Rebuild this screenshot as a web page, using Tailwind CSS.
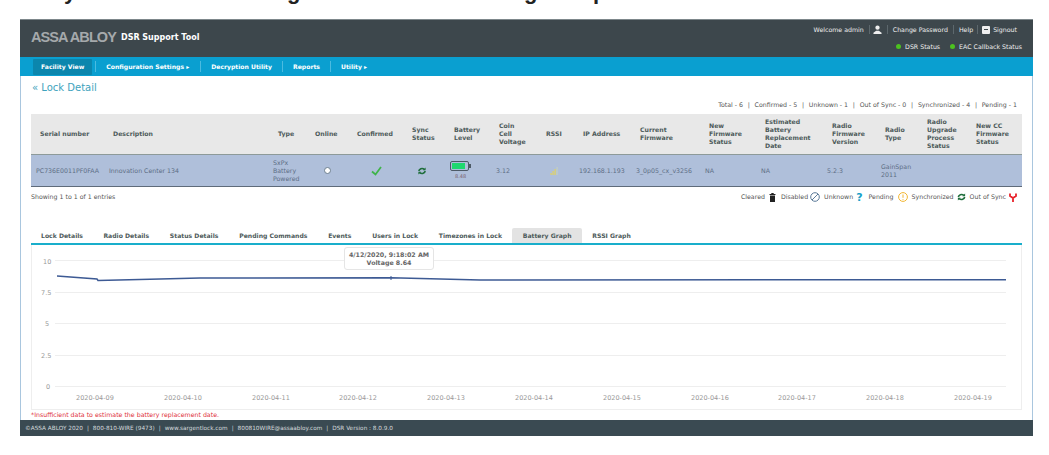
<!DOCTYPE html>
<html lang="en">
<head>
    <meta charset="UTF-8">
    <title>DSR Support Tool</title>
    <script src="https://cdn.jsdelivr.net/npm/@tailwindcss/browser@4"></script>
</head>
<body class="relative bg-white w-[1049px] h-[455px] overflow-hidden font-['DejaVu_Sans',sans-serif] text-[6.25px] text-[#555]">

    <!-- descenders of the heading cut off at the top of the screenshot -->
    <div class="absolute top-[-20px] left-0 font-['Liberation_Sans',sans-serif] text-[22px] leading-[24px] font-bold text-[#222]">
        <span class="absolute left-[64px]">y</span>
        <span class="absolute left-[287px]">g</span>
        <span class="absolute left-[524px]">g</span>
        <span class="absolute left-[593px]">p</span>
    </div>

    <div class="h-[19px]"></div>

    <div class="ml-[20px] w-[1013px] h-[417px] flex flex-col">
        <!-- header -->
        <header class="h-[38px] bg-[#3d474c] border-t border-[#7d878b] flex justify-between text-white shrink-0">
            <div class="flex items-center pl-[11px] pb-[2px]">
                <span class="font-['Liberation_Sans',sans-serif] text-[14.5px] font-bold tracking-[-0.9px] text-[#a5a9ab]">ASSA ABLOY</span>
                <span class="ml-[5px] text-[8px] font-bold">DSR Support Tool</span>
            </div>
            <div class="flex flex-col items-end pr-[11px] pt-[5px] gap-[8px] text-[#eee] leading-[9px]">
                <div class="flex items-center pr-[5px]">
                    <span>Welcome admin</span>
                    <span class="ml-[5px] mr-[3px] h-[9px] border-l border-[#5d686d]"></span>
                    <svg class="w-[9px] h-[9px]" viewBox="0 0 10 10" fill="#eee"><circle cx="5" cy="3" r="2.4"/><path d="M0.5 10V8.5L3.5 6.5H6.500L9.500 8.500V10Z"/></svg>
                    <span class="mx-[5px] h-[9px] border-l border-[#5d686d]"></span>
                    <span>Change Password</span>
                    <span class="mx-[5px] h-[9px] border-l border-[#5d686d]"></span>
                    <span>Help</span>
                    <span class="mx-[4px] h-[9px] border-l border-[#5d686d]"></span>
                    <span class="w-[8px] h-[8px] bg-[#eee] rounded-[1px] mr-[3px] flex items-center justify-center"><span class="w-[4px] h-[1px] bg-[#3d474c]"></span></span>
                    <span>Signout</span>
                </div>
                <div class="flex items-center">
                    <span class="w-[5px] h-[5px] rounded-full bg-[#4cc21f] mr-[4px]"></span>
                    <span>DSR Status</span>
                    <span class="w-[5px] h-[5px] rounded-full bg-[#4cc21f] ml-[10px] mr-[4px]"></span>
                    <span>EAC Callback Status</span>
                </div>
            </div>
        </header>

        <!-- nav -->
        <nav class="h-[19px] bg-[#0a9fd0] flex items-center pl-[13px] text-white font-bold text-[6.1px] shrink-0">
            <span class="h-[16px] px-[8px] flex items-center bg-[#0b86ad] rounded-[1px]">Facility View</span>
            <span class="ml-[3px] h-[11px] border-l border-[#4bbbe0]"></span>
            <span class="pl-[10px] pr-[11px]">Configuration Settings &#9656;</span>
            <span class="h-[11px] border-l border-[#4bbbe0]"></span>
            <span class="px-[10px]">Decryption Utility</span>
            <span class="h-[11px] border-l border-[#4bbbe0]"></span>
            <span class="px-[10px]">Reports</span>
            <span class="h-[11px] border-l border-[#4bbbe0]"></span>
            <span class="px-[10px]">Utility &#9656;</span>
        </nav>

        <!-- content -->
        <main class="flex-1 border-x border-[#a9c6de] px-[10px] flex flex-col min-h-0">
            <h1 class="pl-[1px] pt-[3px] text-[10px] leading-[18px] text-[#3ea3bd] h-[22px]">&laquo; Lock Detail</h1>

            <div class="flex justify-end pr-[5px] pb-[2px] h-[16px] items-center gap-[4.75px]">
                <span>Total - 6</span><span>|</span><span>Confirmed - 5</span><span>|</span><span>Unknown - 1</span><span>|</span><span>Out of Sync - 0</span><span>|</span><span>Synchronized - 4</span><span>|</span><span>Pending - 1</span>
            </div>

            <!-- table -->
            <div class="grid grid-cols-[74px_164px_42px_42px_55px_42px_45px_47px_33px_57px_69px_56px_66px_54px_46px_49px_50px] h-[73px]">
                <div class="col-span-17 grid grid-cols-subgrid h-[41px] bg-[#e8e8e8] border-b border-[#8d9a99] font-bold items-center text-[#4d5a5a] text-[6.2px] leading-[7.8px]">
                    <span class="pl-[9px] whitespace-nowrap">Serial number</span>
                    <span class="pl-[8px]">Description</span>
                    <span class="pl-[9px]">Type</span>
                    <span class="pl-[4px]">Online</span>
                    <span class="pl-[4px]">Confirmed</span>
                    <span class="pl-[4px]">Sync<br>Status</span>
                    <span class="pl-[4px]">Battery<br>Level</span>
                    <span class="pl-[4px]">Coin<br>Cell<br>Voltage</span>
                    <span class="pl-[4px]">RSSI</span>
                    <span class="pl-[8px]">IP Address</span>
                    <span class="pl-[8px]">Current<br>Firmware</span>
                    <span class="pl-[8px]">New<br>Firmware<br>Status</span>
                    <span class="pl-[8px]">Estimated<br>Battery<br>Replacement<br>Date</span>
                    <span class="pl-[9px]">Radio<br>Firmware<br>Version</span>
                    <span class="pl-[8px]">Radio<br>Type</span>
                    <span class="pl-[4px]">Radio<br>Upgrade<br>Process<br>Status</span>
                    <span class="pl-[4px]">New CC<br>Firmware<br>Status</span>
                </div>
                <div class="col-span-17 grid grid-cols-subgrid h-[32px] bg-[#afbfda] border-b border-[#5f6b7a] items-center text-[#5d6e85] leading-[8px]">
                    <span class="pl-[5px] whitespace-nowrap">PC736E0011PF0FAA</span>
                    <span class="pl-[4px]">Innovation Center 134</span>
                    <span class="pl-[4px]">SxPx<br>Battery<br>Powered</span>
                    <span class="pl-[13px]"><span class="block w-[7px] h-[7px] rounded-full bg-white border border-[#6d7f8f]"></span></span>
                    <span class="pl-[18px]">
                        <svg class="w-[11px] h-[10px]" viewBox="0 0 11 10" fill="none" stroke="#3fb44a" stroke-width="1.8"><path d="M1 5.500L4.500 8.500L10 1"/></svg>
                    </span>
                    <span class="pl-[10px]">
                        <svg class="w-[8px] h-[8px]" viewBox="0 0 10 10" fill="none" stroke="#1f6e3c" stroke-width="2"><path d="M1 5C1.500 2.500 5 0.500 8 3"/><path d="M9 5C8.500 7.500 5 9.500 2 7"/><path d="M9.500 0.500V4H6Z" fill="#1f6e3c" stroke="none"/><path d="M0.500 9.500V6H4Z" fill="#1f6e3c" stroke="none"/></svg>
                    </span>
                    <span class="flex flex-col items-start">
                        <span class="w-[19px] h-[10px] border-[1.5px] border-[#4d5a66] rounded-[2px] p-[1px] relative"><span class="block h-full w-[13px] bg-[#1fd86f]"></span><span class="absolute right-[-3px] top-[2px] w-[2px] h-[4px] bg-[#4d5a66]"></span></span>
                        <span class="pl-[5px] text-[5px] leading-[7px] mt-[2px] text-[#7a5f70]">8.48</span>
                    </span>
                    <span class="pl-[1px]">3.12</span>
                    <span class="pl-[8px]">
                        <svg class="w-[8px] h-[9px]" viewBox="0 0 8 9" fill="#e3d35f"><rect x="0.500" y="7" width="1.200" height="2"/><rect x="2.500" y="5" width="1.200" height="4"/><rect x="4.500" y="3" width="1.200" height="6"/><rect x="6.500" y="1" width="1.200" height="8" fill="#c4cfc0"/></svg>
                    </span>
                    <span class="pl-[4px] whitespace-nowrap">192.168.1.193</span>
                    <span class="pl-[4px] whitespace-nowrap">3_0p05_cx_v3256</span>
                    <span class="pl-[4px]">NA</span>
                    <span class="pl-[4px]">NA</span>
                    <span class="pl-[4px]">5.2.3</span>
                    <span class="pl-[4px]">GainSpan<br>2011</span>
                    <span></span>
                    <span></span>
                </div>
            </div>

            <div class="flex justify-between items-center h-[20px]">
                <span>Showing 1 to 1 of 1 entries</span>
                <div class="flex items-center pr-[5px]">
                    <span>Cleared</span>
                    <svg class="w-[7px] h-[9px] ml-[4px] mr-[5px]" viewBox="0 0 7 9" fill="#222"><rect x="2.300" y="0" width="2.400" height="1"/><rect x="0.500" y="1" width="6" height="1"/><rect x="1" y="2.500" width="5" height="6.500"/></svg>
                    <span>Disabled</span>
                    <svg class="w-[10px] h-[10px] ml-[2px] mr-[4px]" viewBox="0 0 10 10" fill="none" stroke="#5c7b99" stroke-width="1"><circle cx="5" cy="5" r="4.300"/><path d="M2 8L8 2"/></svg>
                    <span>Unknown</span>
                    <span class="ml-[3px] mr-[6px] text-[11px] leading-[11px] font-bold text-[#18a0c8]">?</span>
                    <span>Pending</span>
                    <svg class="w-[10px] h-[10px] ml-[4px] mr-[4px]" viewBox="0 0 10 10" fill="none" stroke="#f2b632" stroke-width="1"><circle cx="5" cy="5" r="4.400"/><path d="M5 2.500V5.800M5 7V7.800"/></svg>
                    <span>Synchronized</span>
                    <svg class="w-[9px] h-[8px] ml-[3px] mr-[4px]" viewBox="0 0 10 10" fill="none" stroke="#1f6e3c" stroke-width="2"><path d="M1 5C1.500 2.500 5 0.500 8 3"/><path d="M9 5C8.500 7.500 5 9.500 2 7"/><path d="M9.500 0.500V4H6Z" fill="#1f6e3c" stroke="none"/><path d="M0.500 9.500V6H4Z" fill="#1f6e3c" stroke="none"/></svg>
                    <span>Out of Sync</span>
                    <svg class="w-[8px] h-[9px] ml-[3px]" viewBox="0 0 8 9" fill="none" stroke="#e8232b" stroke-width="1.800"><path d="M1 0.500V3L4 5V9M7 0.500V3L4 5"/></svg>
                </div>
            </div>

            <!-- tabs -->
            <div class="mt-[21px] flex h-[15px] border-b-[2px] border-[#19aecb] box-content font-bold text-[6.12px] text-[#4d5a5a] shrink-0">
                <span class="px-[10px] flex items-center">Lock Details</span>
                <span class="px-[10.4px] flex items-center">Radio Details</span>
                <span class="px-[10.4px] flex items-center">Status Details</span>
                <span class="px-[10.4px] flex items-center">Pending Commands</span>
                <span class="px-[10.4px] flex items-center">Events</span>
                <span class="px-[10.4px] flex items-center">Users in Lock</span>
                <span class="px-[10.4px] flex items-center">Timezones in Lock</span>
                <span class="px-[10.4px] flex items-center bg-[#e3e3e3] rounded-t-[2px]">Battery Graph</span>
                <span class="px-[10.4px] flex items-center">RSSI Graph</span>
            </div>

            <!-- chart -->
            <div class="relative h-[165px] border-x border-b border-[#eee] shrink-0">
                <svg class="absolute inset-0" width="989" height="164" viewBox="0 0 989 164" font-size="6.500" fill="#999">
                    <g stroke="#eee" stroke-width="1">
                        <path d="M23 15.500H974"/><path d="M23 47.500H974"/><path d="M23 78.500H974"/><path d="M23 110.500H974"/><path d="M23 141.500H974"/>
                    </g>
                    <path d="M25 31L65 34L66 35.500L118 34.300L168 33L359 32.700L448 35L974 34.700" fill="none" stroke="#3d5a94" stroke-width="1.500"/>
                    <path d="M359 31V35" stroke="#3d5a94" stroke-width="1"/>
                    <text x="11" y="18.500">10</text><text x="9" y="50">7.5</text><text x="13" y="81">5</text><text x="9" y="113">2.5</text><text x="14" y="144">0</text>
                    <text x="44" y="154.500">2020-04-09</text><text x="132" y="154.500">2020-04-10</text><text x="220" y="154.500">2020-04-11</text><text x="307" y="154.500">2020-04-12</text><text x="395" y="154.500">2020-04-13</text><text x="483" y="154.500">2020-04-14</text><text x="571" y="154.500">2020-04-15</text><text x="659" y="154.500">2020-04-16</text><text x="746" y="154.500">2020-04-17</text><text x="834" y="154.500">2020-04-18</text><text x="922" y="154.500">2020-04-19</text>
                </svg>
                <div class="absolute left-[312px] top-[2px] w-[90px] h-[23px] bg-white border border-[#e5e5e5] rounded-[3px] text-center text-[6.3px] leading-[8px] pt-[3px] font-bold text-[#666]">
                    4/12/2020, 9:18:02 AM<br>Voltage 8.64
                </div>
            </div>

            <p class="leading-[9px] text-[#e0303a]">*Insufficient data to estimate the battery replacement date.</p>
        </main>

        <!-- footer -->
        <footer class="h-[16px] bg-[#3a4a52] shrink-0 flex items-center pl-[5px] text-[5.75px] text-[#d5dadd] gap-[4px]">
            <span>©ASSA ABLOY 2020</span><span>|</span><span>800-810-WIRE (9473)</span><span>|</span><span>www.sargentlock.com</span><span>|</span><span>800810WIRE@assaabloy.com</span><span>|</span><span>DSR Version : 8.0.9.0</span>
        </footer>
    </div>
</body>
</html>
